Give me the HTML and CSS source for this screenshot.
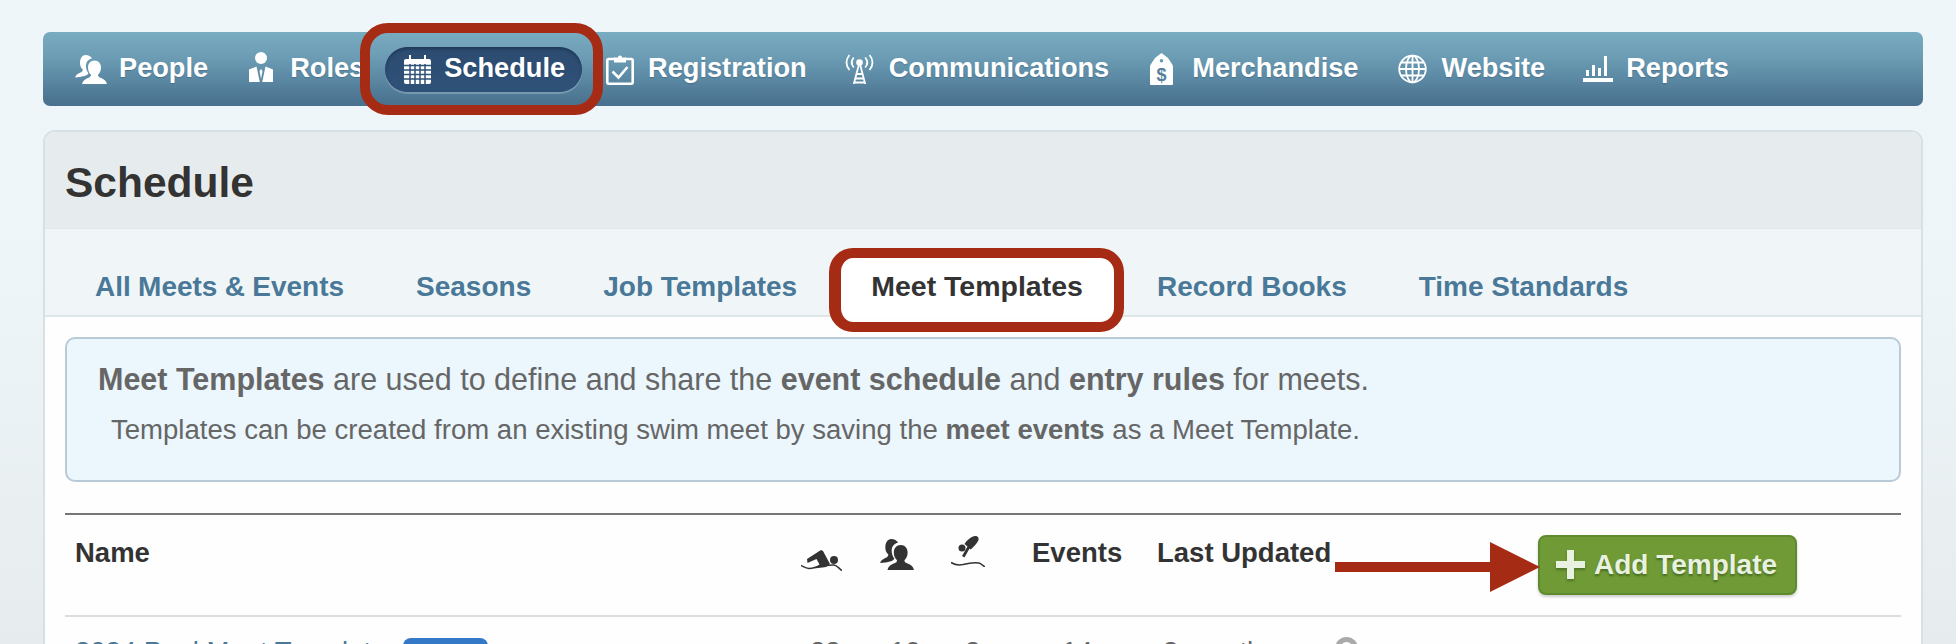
FILE: index.html
```html
<!DOCTYPE html>
<html lang="en">
<head>
<meta charset="utf-8">
<title>Schedule - Meet Templates</title>
<link rel="stylesheet" href="styles.css">
</head>
<body>
<svg class="defs" width="0" height="0" aria-hidden="true">
  <symbol id="i-people" viewBox="0 0 32 29">
    <path d="M10.500 0c3 0 5.500 1.500 6.500 3.500-3.800.6-6 3.700-6 7.500 0 3 1 5.500 2.500 7.300-.2.600-.5 1-1.200 1.500-2.500 1.500-5.500 1.600-7.300 2.200l-5 .5c.8-2.800 4-4.500 6.500-5.500 1-.6 1.300-1.400 1.300-2.400-1.800-1.900-2.800-3.700-2.800-6.600 0-4.700 2.300-8 5.500-8z"/>
    <path d="M19.500 5.500c4 0 6.500 3 6.500 7 0 3.300-1.300 5.600-3 7.300 0 1.600.8 2.300 2.500 3 3 1.100 5.500 2.600 6.500 6.200H7c1-3.600 3.500-5.100 6.500-6.200 1.700-.7 2.500-1.400 2.500-3-1.700-1.700-3-4-3-7.300 0-4 2.500-7 6.500-7z"/>
  </symbol>
  <symbol id="i-swim" viewBox="0 0 41 21">
    <circle cx="33" cy="10" r="4"/>
    <path d="M6 9 20 0l2 1 7 13-4 3-3.500 .5c-3 .6-6 .5-9 .8l6-3.800-3-5.500-9 4z"/>
    <path d="M0 15.500c3 1.500 5 3 8 3 5 0 8-2.500 13-2.500 6 0 8-1.500 12-1 3 .4 5 3.500 8 5.500" fill="none" stroke="currentColor" stroke-width="1.500"/>
  </symbol>
  <symbol id="i-dive" viewBox="0 0 34 31">
    <circle cx="11" cy="12" r="3.500"/>
    <path d="M11 20 16.500 10.500 13.500 8C16 4 21 0 24 0c3 0 4 2 3.500 4-1 2.500-4.500 7-8 9.500l-1-1-5 9z"/>
    <path d="M0 26.500c4 2.500 7 3 12 2 6-1.500 10-2.500 16-1.500 2 .5 4 2.500 6 4" fill="none" stroke="currentColor" stroke-width="1.500"/>
  </symbol>
</svg>

<nav class="topnav">
  <a class="nav-item">
    <svg class="ico" width="32" height="29"><use href="#i-people"/></svg>
    <span>People</span>
  </a>
  <a class="nav-item">
    <svg class="ico ico-roles" width="24" height="30" viewBox="0 0 24 30">
      <circle cx="12" cy="6" r="6"/>
      <path d="M0 30V17.500L7.500 14.500 10.800 30z"/>
      <path d="M24 30V17.500L16.500 14.500 13.200 30z"/>
      <path d="M12 17l1.500 2-1.500 8-1.500-8z"/>
    </svg>
    <span>Roles</span>
  </a>
  <a class="nav-item is-active">
    <svg class="ico gap-1" width="27" height="29" viewBox="0 0 27 29">
      <path d="M5 0h2v4h13V0h2v4h3a2 2 0 0 1 2 2v21a2 2 0 0 1-2 2H2a2 2 0 0 1-2-2V6a2 2 0 0 1 2-2h3z"/>
      <path class="cal-lines" d="M0 10.500h27M0 15h27M0 19.500h27M0 24h27M6 9v20M11 9v20M16 9v20M21 9v20" fill="none"/>
    </svg>
    <span>Schedule</span>
    <i class="ring ring-nav"></i>
  </a>
  <a class="nav-item">
    <svg class="ico gap-2" width="28" height="31" viewBox="0 0 28 31">
      <path class="ln" d="M9 5H2.500A1.300 1.300 0 0 0 1.300 6.300v22.400a1.300 1.300 0 0 0 1.200 1h23a1.300 1.300 0 0 0 1.200-1V6.300A1.300 1.300 0 0 0 25.500 5H19"/>
      <path d="M8 3.500h4a2 2 0 0 1 4 0h4v5H8z"/>
      <path class="ln" d="M6.500 17.500l6 6 9-10.500"/>
    </svg>
    <span>Registration</span>
  </a>
  <a class="nav-item nav-tight-4">
    <svg class="ico gap-2" width="31" height="30" viewBox="0 0 31 30">
      <circle cx="15.500" cy="8.500" r="3.300"/>
      <path class="ln thin" d="M9.800 3.500c-2.500 3-2.500 7 0 10M21.200 3.500c2.500 3 2.500 7 0 10M5.500 1c-4 4.500-4 10.500 0 15M25.500 1c4 4.500 4 10.500 0 15"/>
      <path class="ln thin" d="M14.800 11 9.800 30M16.200 11l5 19M12.500 20h6M11.500 24.500h8M10.300 28.500h10.400"/>
    </svg>
    <span>Communications</span>
  </a>
  <a class="nav-item">
    <svg class="ico gap-7" width="23" height="32" viewBox="0 0 23 32">
      <path fill-rule="evenodd" d="M11.500 0 18 5l4 6q1 1 1 3v17a1 1 0 0 1-1 1H1a1 1 0 0 1-1-1V14q0-2 1-3l4-6zM11.500 6a1.800 1.800 0 1 0 0 3.600 1.800 1.800 0 0 0 0-3.600z"/>
      <text class="tag-sign" x="11.500" y="28" text-anchor="middle">$</text>
    </svg>
    <span>Merchandise</span>
  </a>
  <a class="nav-item nav-tight-1">
    <svg class="ico gap-2" width="29" height="30" viewBox="0 0 29 30">
      <g class="ln thin">
        <circle cx="14.500" cy="15" r="13.300"/>
        <ellipse cx="14.500" cy="15" rx="6.500" ry="13.300"/>
        <path d="M14.500 1.700v26.600M1.200 15h26.600M3 8.500h23M3 21.500h23"/>
      </g>
    </svg>
    <span>Website</span>
  </a>
  <a class="nav-item nav-tight-3">
    <svg class="ico gap-1" width="30" height="26" viewBox="0 0 30 26">
      <path d="M0 22h30v4H0zM3 14h3v6H3zM9 9h3v11H9zM15 12h3v8h-3zM21 0h3v20h-3z"/>
    </svg>
    <span>Reports</span>
  </a>
</nav>

<main class="panel">
  <header class="panel-head"><h1>Schedule</h1></header>
  <ul class="tabs">
    <li class="tab tab-first">All Meets &amp; Events</li>
    <li class="tab">Seasons</li>
    <li class="tab">Job Templates</li>
    <li class="tab is-current">Meet Templates<i class="ring ring-tab"></i></li>
    <li class="tab">Record Books</li>
    <li class="tab">Time Standards</li>
  </ul>
  <section class="content">
    <div class="info">
      <p class="info-lead"><b>Meet Templates</b> are used to define and share the <b>event schedule</b> and <b>entry rules</b> for meets.</p>
      <p class="info-sub">Templates can be created from an existing swim meet by saving the <b>meet events</b> as a Meet Template.</p>
    </div>
    <div class="table">
      <div class="row row-head">
        <div class="cell">Name</div>
        <div class="cell cell-swim"><svg class="ico-dark" width="41" height="21"><use href="#i-swim"/></svg></div>
        <div class="cell cell-people"><svg class="ico-dark" width="34" height="31"><use href="#i-people"/></svg></div>
        <div class="cell cell-dive"><svg class="ico-dark" width="34" height="31"><use href="#i-dive"/></svg></div>
        <div class="cell">Events</div>
        <div class="cell">Last Updated</div>
        <div class="cell cell-action">
          <svg class="arrow" width="205" height="50" viewBox="0 0 205 50"><path d="M0 20h155V0l50 25-50 25V30H0z"/></svg>
          <button class="btn-add" type="button">
            <svg class="plus" width="29" height="29" viewBox="0 0 29 29"><path d="M11 0h7v11h11v7H18v11h-7V18H0v-7h11z"/></svg>
            <span>Add Template</span>
          </button>
        </div>
      </div>
      <div class="row row-body">
        <div class="cell cell-name"><a>2024 Pool Meet Template</a><span class="badge">Public</span></div>
        <div class="cell cell-n1">22</div>
        <div class="cell cell-n2">10</div>
        <div class="cell cell-n3">2</div>
        <div class="cell cell-n4">14</div>
        <div class="cell cell-n5">3 months ago<i class="help"></i></div>
      </div>
    </div>
  </section>
</main>
</body>
</html>
```
FILE: styles.css
```css
* { box-sizing: border-box; }
html, body { height: 644px; overflow: hidden; }
body {
  margin: 0;
  padding: 32px 33px 0 43px;
  font-family: "Liberation Sans", Arial, Helvetica, sans-serif;
  color: #333;
  background: linear-gradient(180deg, #eff6f9 0%, #eef5f8 40%, #e6ecee 100%);
}
.defs { position: absolute; }

.topnav {
  display: flex;
  align-items: center;
  gap: 7px;
  height: 74px;
  padding-left: 15px;
  border-radius: 7px;
  background: linear-gradient(180deg, #79abc1 0%, #6b9cb4 35%, #4b7491 92%, #4a7190 100%);
}
.nav-item {
  position: relative;
  display: flex;
  align-items: center;
  gap: 12px;
  height: 45px;
  padding: 0 17px;
  color: #fff;
  font-size: 27.2px;
  font-weight: 700;
  white-space: nowrap;
  text-shadow: 0 1px 1px rgba(40, 70, 95, .35);
}
.nav-item span { margin-top: -2px; }
.nav-tight-1 { margin-left: -1px; }
.nav-tight-3 { margin-left: -3px; }
.nav-tight-4 { margin-left: -4px; }
.ico { fill: #fff; flex: none; }
.ico-roles { margin-right: 5px; margin-top: -4px; }
.gap-1 { margin-right: 1px; }
.gap-2 { margin-right: 2px; }
.gap-7 { margin-right: 7px; }
.ln { fill: none; stroke: #fff; stroke-width: 2.600; }
.thin { stroke-width: 1.800; }
.cal-lines { stroke: #2f5277; stroke-width: 1.500; }
.tag-sign { fill: #587f9c; font-size: 18px; font-weight: 700; font-family: "Liberation Sans", sans-serif; text-shadow: none; }
.nav-item.is-active {
  margin-left: -3px;
  padding-left: 19px;
  border-radius: 23px;
  background: linear-gradient(180deg, #2c4b70 0%, #2f5278 100%);
  box-shadow: inset 0 2px 3px rgba(15, 35, 60, .45), 0 2px 0 rgba(255, 255, 255, .22);
}
.ring {
  position: absolute;
  border: 10px solid #a62b15;
  pointer-events: none;
  z-index: 3;
}
.ring-nav { inset: -24px -21px -23px -25px; border-radius: 28px; }
.ring-tab { inset: -10px -3px -15px -4px; border-left-width: 12px; border-radius: 24px; }

.panel {
  margin-top: 24px;
  border: 2px solid #d6e0e5;
  border-radius: 12px;
  background: #fefefe;
}
.panel-head {
  display: flex;
  align-items: center;
  height: 96px;
  padding: 5px 0 0 20px;
  border-radius: 10px 10px 0 0;
  background: #e6eced;
}
.panel-head h1 { margin: 0; font-size: 42.5px; font-weight: 700; color: #333; }

.tabs {
  display: flex;
  margin: 0;
  padding: 29px 0 0 14px;
  height: 89px;
  list-style: none;
  background: #f0f6f7;
  border-top: 1px solid #e2e9ec;
  border-bottom: 2px solid #dfe6ea;
}
.tab {
  position: relative;
  padding: 0 36px;
  height: 57px;
  line-height: 57px;
  font-size: 28px;
  font-weight: 700;
  color: #4a7898;
  white-space: nowrap;
}
.tab-first { word-spacing: -.5px; }
.tab.is-current {
  height: 59px;
  padding: 0 38px;
  font-size: 28.5px;
  color: #333;
  background: #fff;
}

.content { padding: 20px; }
.info {
  height: 145px;
  padding: 22px 31px 0;
  border: 2px solid #b9cad7;
  border-radius: 10px;
  background: #ebf6fd;
  color: #666;
}
.info p { margin: 0; white-space: nowrap; }
.info-lead { font-size: 30.5px; line-height: 36px; }
.info .info-sub { font-size: 27.55px; line-height: 32px; margin-top: 17px; padding-left: 13px; }

.table { margin-top: 31px; border-top: 2px solid #777; }
.row {
  display: grid;
  grid-template-columns: 726px 79px 71px 81px 125px 381px 259px;
  padding-left: 10px;
  font-size: 27.5px;
  line-height: 32px;
}
.row-head {
  height: 102px;
  border-bottom: 2px solid #ddd;
  font-weight: 700;
  color: #333;
}
.row-head .cell { padding-top: 22px; white-space: nowrap; }
.ico-dark { display: block; fill: #333; color: #333; }
.row-head .cell-swim { padding-top: 35px; }
.row-head .cell-people { padding-top: 24px; }
.row-head .cell-dive { padding-top: 21px; }
.row-head .cell-action { position: relative; padding-top: 20px; }
.arrow {
  position: absolute;
  left: -203px;
  top: 27px;
  fill: #a62b15;
  z-index: 2;
}
.btn-add {
  display: flex;
  align-items: center;
  gap: 9px;
  width: 259px;
  height: 60px;
  padding: 0 0 1px 16px;
  border: 2px solid #5f8a2e;
  border-radius: 8px;
  background: #6f9a36;
  color: #e9f1e0;
  font: 700 28px "Liberation Sans", Arial, sans-serif;
  text-shadow: 0 2px 2px rgba(50, 80, 20, .6);
  box-shadow: 0 2px 3px rgba(0, 0, 0, .2);
}
.plus { flex: none; fill: #e9f1e0; filter: drop-shadow(0 2px 1px rgba(50, 80, 20, .5)); }

.row-body { padding-top: 19px; color: #666; }
.cell-name { display: flex; gap: 17px; align-items: flex-start; }
.cell-name a { color: #4a7898; white-space: nowrap; }
.cell-n1 { padding-left: 9px; }
.cell-n2 { padding-left: 10px; }
.cell-n3 { padding-left: 14px; }
.cell-n4 { padding-left: 30px; }
.cell-n5 { padding-left: 6px; }
.badge {
  width: 85px;
  height: 30px;
  margin-top: 2px;
  border-radius: 8px;
  background: #3478c8;
  color: #fff;
  font-size: 18px;
  text-align: center;
}
.cell-n5 { position: relative; white-space: nowrap; }
.help {
  position: absolute;
  left: 178px;
  top: 1px;
  width: 23px;
  height: 23px;
  border: 5px solid #aaa;
  border-radius: 50%;
}
```
